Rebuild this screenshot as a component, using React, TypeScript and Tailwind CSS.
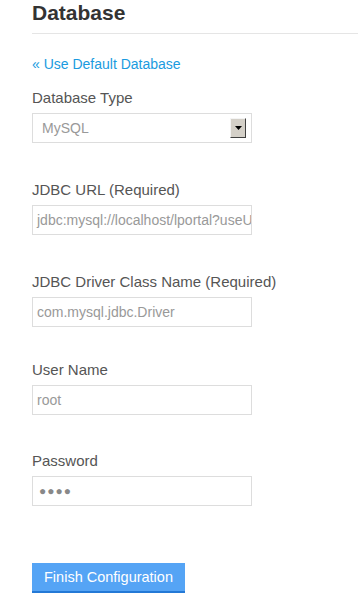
import React from 'react'

const font = { fontFamily: '"Liberation Sans", Arial, sans-serif' }

function Field({ label, value, className }: { label: string; value: React.ReactNode; className: string }) {
  return (
    <div className={className}>
      <div className="text-[15px] leading-[20px] text-[#555555] mb-[5px]">{label}</div>
      <div className="w-[220px] h-[30px] border border-[#dddddd] bg-white pl-[4px] flex items-center text-[14px] text-[#999999] overflow-hidden whitespace-nowrap">
        {value}
      </div>
    </div>
  )
}

export default function App() {
  return (
    <div className="bg-white min-h-[604px] pl-[32px]" style={font}>
      <h1 className="text-[21px] leading-[26px] font-bold text-[#333333]">Database</h1>
      <div className="border-b border-[#e5e5e5] mt-[7px]" />

      <a className="block mt-[20px] text-[14px] leading-[20px] text-[#1a9be0]">« Use Default Database</a>

      <div className="mt-[14px]">
        <div className="text-[15px] leading-[20px] text-[#555555] mb-[5px]">Database Type</div>
        <div className="w-[220px] h-[30px] border border-[#dddddd] bg-white pl-[9px] pr-[5px] flex items-center justify-between text-[14px] text-[#999999]">
          <span>MySQL</span>
          <span className="w-[16px] h-[20px] bg-[#d4d0c8] border border-t-[#f4f4f4] border-l-[#f4f4f4] border-r-[#404040] border-b-[#404040] flex items-center justify-center">
            <svg width="7" height="4" viewBox="0 0 7 4">
              <path d="M0 0h7L3.5 4z" fill="#000" />
            </svg>
          </span>
        </div>
      </div>

      <Field label="JDBC URL (Required)" value="jdbc:mysql://localhost/lportal?useUnicode=true" className="mt-[37px]" />
      <Field label="JDBC Driver Class Name (Required)" value="com.mysql.jdbc.Driver" className="mt-[37px]" />
      <Field label="User Name" value="root" className="mt-[33px]" />
      <Field
        label="Password"
        value={<span className="tracking-[1px] text-[#888888] text-[12px] pl-[2px]">●●●●</span>}
        className="mt-[36px]"
      />

      <button className="mt-[57px] w-[153px] h-[30px] bg-[#55a4f5] border-b-2 border-[#2479d6] text-white text-[14.5px] leading-[20px]">
        Finish Configuration
      </button>
    </div>
  )
}
